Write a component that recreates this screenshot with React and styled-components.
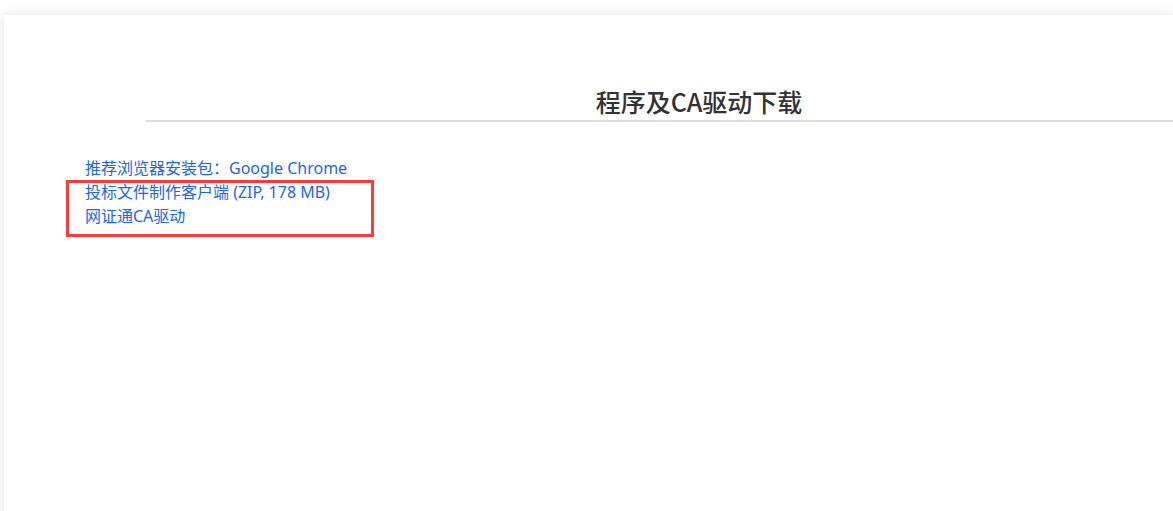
import React from "react";
import styled, { createGlobalStyle } from "styled-components";

const GlobalStyle = createGlobalStyle`
  html, body {
    margin: 0;
    padding: 0;
    background: #ffffff;
    overflow: hidden;
  }
  body {
    font-family: "Noto Sans", "Noto Sans CJK SC", sans-serif;
  }
`;

const Page = styled.div`
  padding: 15px 0 0 4px;
  height: 511px;
  box-sizing: border-box;
  overflow: hidden;
`;

const Card = styled.section`
  position: relative;
  height: 520px;
  background: #fff;
  box-shadow: 0 0 12px rgba(0, 0, 0, 0.12);
  padding: 71px 0 0 0;
  box-sizing: border-box;
  overflow: hidden;
`;

const Header = styled.div`
  margin-left: 142px;
  width: 1106px;
  border-bottom: 2px solid #dddddd;
  text-align: center;
  padding-bottom: 4px;
`;

const Title = styled.h2`
  margin: 0;
  font-size: 25px;
  line-height: 30px;
  font-weight: 500;
  color: #333333;
  font-family: "Noto Sans CJK SC", "Noto Sans", sans-serif;
`;

const LinkList = styled.ul`
  list-style: none;
  margin: 34px 0 0 81px;
  padding: 0;
`;

const Item = styled.li`
  font-size: 16px;
  line-height: 24px;
`;

const Link = styled.a`
  color: #1a66f5;
  text-decoration: none;
  font-family: "Noto Sans", "Noto Sans CJK SC", sans-serif;
`;

const Highlight = styled.div`
  position: absolute;
  left: 62px;
  top: 165px;
  width: 308px;
  height: 57px;
  border: 3px solid #ff3838;
  box-sizing: border-box;
  pointer-events: none;
`;

const links = [
  "推荐浏览器安装包：Google Chrome",
  "投标文件制作客户端 (ZIP, 178 MB)",
  "网证通CA驱动",
];

export default function App() {
  return (
    <>
      <GlobalStyle />
      <Page>
        <Card>
          <Header>
            <Title>程序及CA驱动下载</Title>
          </Header>
          <LinkList>
            {links.map((text) => (
              <Item key={text}>
                <Link href="#">{text}</Link>
              </Item>
            ))}
          </LinkList>
          <Highlight />
        </Card>
      </Page>
    </>
  );
}
